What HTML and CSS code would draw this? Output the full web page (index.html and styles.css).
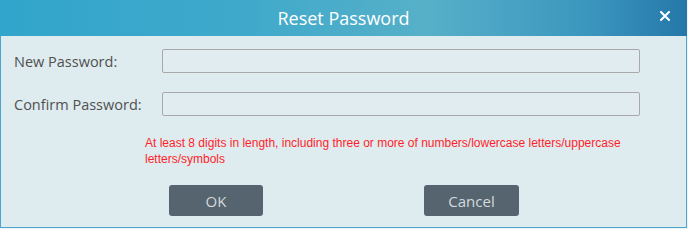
FILE: index.html
```html
<!DOCTYPE html>
<html>
<head>
<meta charset="utf-8">
<link rel="stylesheet" href="styles.css">
</head>
<body>
<div class="dialog">
  <div class="header">
    <span class="title">Reset Password</span>
    <span class="close">
      <svg width="10" height="10" viewBox="0 0 10 10"><path d="M1 1 L9 9 M9 1 L1 9" stroke="#fff" stroke-width="2" stroke-linecap="square" fill="none"/></svg>
    </span>
  </div>
  <div class="content">
    <div class="row">
      <label class="label">New Password:</label>
      <div class="input"></div>
    </div>
    <div class="row">
      <label class="label">Confirm Password:</label>
      <div class="input"></div>
    </div>
    <div class="hint">At least 8 digits in length, including three or more of numbers/lowercase letters/uppercase letters/symbols</div>
    <div class="buttons">
      <div class="btn">OK</div>
      <div class="btn btn-cancel">Cancel</div>
    </div>
  </div>
</div>
</body>
</html>
```
FILE: styles.css
```css
html, body {
  margin: 0;
  padding: 0;
}
body {
  background: #eef2f3;
  width: 688px;
  height: 229px;
  overflow: hidden;
  font-family: "Open Sans", "Noto Sans", sans-serif;
}
.dialog {
  width: 687px;
  height: 228px;
  box-sizing: border-box;
  border: 1px solid #4aa6cc;
  border-top: none;
  background: #deebef;
  display: flex;
  flex-direction: column;
}
.header {
  height: 36px;
  flex: none;
  position: relative;
  display: flex;
  align-items: center;
  justify-content: center;
  background: linear-gradient(to right, #31a5cb 0%, #3fa9cb 35%, #56b0c8 62%, #3c97bf 85%, #2478a9 100%);
  margin: 0 -1px;
}
.title {
  color: #fff;
  font-size: 18px;
  line-height: 36px;
}
.close {
  position: absolute;
  left: 660px;
  top: 11px;
  width: 10px;
  height: 10px;
  display: flex;
}
.content {
  display: flex;
  flex-direction: column;
  padding: 13px 0 0 13px;
}
.row {
  display: flex;
  align-items: center;
  height: 24px;
  margin-bottom: 19px;
}
.label {
  width: 148px;
  color: #505050;
  font-size: 14.5px;
}
.input {
  width: 478px;
  height: 24px;
  box-sizing: border-box;
  border: 1px solid #a9a9a9;
  border-radius: 2px;
  background: #e0ecf0;
}
.hint {
  margin: 0 0 0 131px;
  width: 490px;
  color: #ff1f2a;
  font-family: "Liberation Sans", sans-serif;
  font-size: 12px;
  line-height: 16px;
}
.buttons {
  display: flex;
  margin: 18px 0 0 155px;
  gap: 161px;
}
.btn {
  width: 94px;
  height: 31px;
  border-radius: 3px;
  background: #56646f;
  color: #d3d9dd;
  font-size: 15px;
  display: flex;
  align-items: center;
  justify-content: center;
}
.btn-cancel {
  width: 95px;
}
```
